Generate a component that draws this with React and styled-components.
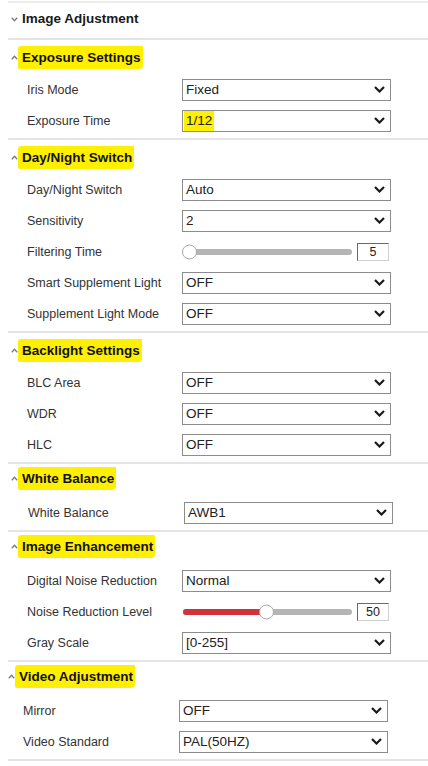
import styled, { createGlobalStyle } from 'styled-components';

const GlobalStyle = createGlobalStyle`
  body {
    margin: 0;
    background: #fff;
    font-family: 'Liberation Sans', Arial, sans-serif;
  }
`;

const sections = [
  {
    title: 'Exposure Settings',
    rows: [
      { label: 'Iris Mode', type: 'select', value: 'Fixed' },
      { label: 'Exposure Time', type: 'select', value: '1/12', mark: true },
    ],
  },
  {
    title: 'Day/Night Switch',
    rows: [
      { label: 'Day/Night Switch', type: 'select', value: 'Auto' },
      { label: 'Sensitivity', type: 'select', value: '2' },
      { label: 'Filtering Time', type: 'slider', value: 5, min: 5, max: 120 },
      { label: 'Smart Supplement Light', type: 'select', value: 'OFF' },
      { label: 'Supplement Light Mode', type: 'select', value: 'OFF' },
    ],
  },
  {
    title: 'Backlight Settings',
    rows: [
      { label: 'BLC Area', type: 'select', value: 'OFF' },
      { label: 'WDR', type: 'select', value: 'OFF' },
      { label: 'HLC', type: 'select', value: 'OFF' },
    ],
  },
  {
    title: 'White Balance',
    labelX: 28,
    controlX: 184,
    compact: true,
    rows: [{ label: 'White Balance', type: 'select', value: 'AWB1' }],
  },
  {
    title: 'Image Enhancement',
    compact: true,
    rows: [
      { label: 'Digital Noise Reduction', type: 'select', value: 'Normal' },
      { label: 'Noise Reduction Level', type: 'slider', value: 50, min: 0, max: 100, fill: true },
      { label: 'Gray Scale', type: 'select', value: '[0-255]' },
    ],
  },
  {
    title: 'Video Adjustment',
    shift: -3,
    labelX: 23,
    controlX: 179,
    compact: true,
    rows: [
      { label: 'Mirror', type: 'select', value: 'OFF' },
      { label: 'Video Standard', type: 'select', value: 'PAL(50HZ)' },
    ],
  },
];

const Caret = ({ up }) => (
  <svg width="7" height="5" viewBox="0 0 7 5">
    <path
      d={up ? 'M0.8 4.2 L3.5 1.2 L6.2 4.2' : 'M0.8 0.8 L3.5 3.8 L6.2 0.8'}
      fill="none"
      stroke="#7a7a7a"
      strokeWidth="1.3"
    />
  </svg>
);

const SelectArrow = () => (
  <svg width="11" height="7" viewBox="0 0 11 7">
    <path d="M1 1 L5.5 5.5 L10 1" fill="none" stroke="#1a1a1a" strokeWidth="2.2" />
  </svg>
);

const Field = ({ row }) => {
  if (row.type === 'slider') {
    const pct = ((row.value - row.min) / (row.max - row.min)) * 100;
    return (
      <SliderWrap>
        <Track>
          {row.fill ? <TrackFill style={{ width: `calc((100% - 15px) * ${pct / 100} + 7px)` }} /> : null}
          <Thumb style={{ left: `calc((100% - 15px) * ${pct / 100})` }} />
        </Track>
        <NumberBox>{row.value}</NumberBox>
      </SliderWrap>
    );
  }
  return (
    <SelectBox>
      <SelectValue $mark={row.mark}>{row.value}</SelectValue>
      <SelectArrow />
    </SelectBox>
  );
};

const App = () => (
  <>
    <GlobalStyle />
    <Page>
      <Title>
        <Caret />
        <span>Image Adjustment</span>
      </Title>
      {sections.map((section) => (
        <Section key={section.title}>
          <Header $shift={section.shift || 0} $compact={section.compact}>
            <Caret up />
            <Marker>{section.title}</Marker>
          </Header>
          <Rows $compact={section.compact}>
            {section.rows.map((row) => (
              <Row
                key={row.label}
                $labelX={section.labelX || 27}
                $controlX={section.controlX || 182}
              >
                <Label>{row.label}</Label>
                <Field row={row} />
              </Row>
            ))}
          </Rows>
        </Section>
      ))}
    </Page>
  </>
);

const Page = styled.div`
  width: 420px;
  padding: 1px 0 0 8px;
`;

const Title = styled.div`
  display: flex;
  align-items: center;
  gap: 4px;
  height: 20px;
  padding: 5px 0 10px 3px;
  border-top: 2px solid #ececec;
  border-bottom: 2px solid #e4e4e4;
  font-size: 13.5px;
  font-weight: bold;
  color: #1a1a1a;

  & svg {
    margin-top: 3px;
  }
`;

const Section = styled.div`
  border-bottom: 2px solid #e4e4e4;
`;

const Header = styled.div`
  display: flex;
  align-items: center;
  height: 22px;
  margin-top: ${(p) => (p.$compact ? 3 : 6)}px;
  padding-left: ${(p) => 3 + p.$shift}px;
  font-size: 13.5px;
  font-weight: bold;
  color: #111;

  & svg {
    margin-top: 1px;
  }
`;

const Marker = styled.span`
  display: inline-block;
  padding: 3px 2px 3px 4px;
  background: #ffef00;
  border-radius: 3px 1px 4px 2px;
  line-height: 17px;
`;

const Rows = styled.div`
  display: flex;
  flex-direction: column;
  padding: ${(p) => (p.$compact ? 8 : 6)}px 0 2px 0;
`;

const Row = styled.div`
  display: grid;
  grid-template-columns: ${(p) => p.$controlX - p.$labelX}px 209px;
  align-items: center;
  height: 31px;
  padding-left: ${(p) => p.$labelX - 8}px;
`;

const Label = styled.span`
  font-size: 12.5px;
  color: #333;
  white-space: nowrap;
`;

const SelectBox = styled.div`
  box-sizing: border-box;
  display: flex;
  align-items: center;
  justify-content: space-between;
  height: 22px;
  padding: 0 5px 0 1px;
  border: 1px solid #8c8c8c;
  background: #fff;
`;

const SelectValue = styled.span`
  display: flex;
  align-items: center;
  height: 20px;
  padding: 0 2px;
  font-size: 13.5px;
  color: #222;
  background: ${(p) => (p.$mark ? '#ffef00' : 'transparent')};
`;

const SliderWrap = styled.div`
  display: flex;
  align-items: center;
  gap: 5px;
  padding-left: 1px;
`;

const Track = styled.div`
  position: relative;
  width: 169px;
  height: 6px;
  border-radius: 3px;
  background: #b5b5b5;
`;

const TrackFill = styled.div`
  height: 100%;
  border-radius: 3px 0 0 3px;
  background: #d0343a;
`;

const Thumb = styled.div`
  position: absolute;
  top: 50%;
  width: 15px;
  height: 15px;
  transform: translate(-1px, -50%);
  box-sizing: border-box;
  border: 1px solid #a8a8a8;
  border-radius: 50%;
  background: #fff;
`;

const NumberBox = styled.div`
  box-sizing: border-box;
  width: 32px;
  height: 18px;
  border: 1px solid #d0d0d0;
  border-top-color: #6a6a6a;
  border-left-color: #6a6a6a;
  font-size: 12.5px;
  line-height: 16px;
  text-align: center;
  color: #222;
`;

export default App;
